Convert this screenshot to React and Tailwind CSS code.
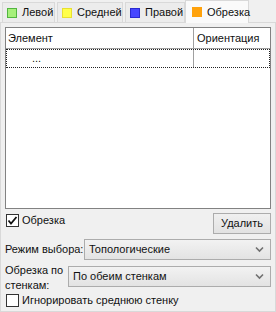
import React from 'react'

const tabs = [
  { label: 'Левой', w: 'w-[53px]', swatch: 'bg-[#a6f07a] border-[#52b540]' },
  { label: 'Средней', w: 'w-[66px]', swatch: 'bg-[#ffff4a] border-[#e8e030]' },
  { label: 'Правой', w: 'w-[60px]', swatch: 'bg-[#4646ff] border-[#2a2ad0]' },
]

function Chevron() {
  return (
    <svg width="9" height="7" viewBox="0 0 9 7" className="text-[#707070] shrink-0">
      <path d="M1 1.5 L4.5 5 L8 1.5" fill="none" stroke="currentColor" strokeWidth="1.6" />
    </svg>
  )
}

function Select({ value, className }) {
  return (
    <div className={`h-[21px] flex items-center justify-between border border-[#acacac] bg-gradient-to-b from-[#f2f2f2] to-[#e3e3e3] pl-[4px] pr-[6px] ${className}`}>
      <span className="whitespace-nowrap">{value}</span>
      <Chevron />
    </div>
  )
}

function Check({ checked }) {
  return (
    <div className="w-[13px] h-[13px] shrink-0 border border-[#333] bg-white flex items-center justify-center">
      {checked && (
        <svg width="11" height="11" viewBox="0 0 11 11">
          <path d="M1.5 5.5 L4 8.5 L9.5 2" fill="none" stroke="#111" strokeWidth="1.8" />
        </svg>
      )}
    </div>
  )
}

export default function App() {
  return (
    <div className="w-[276px] h-[312px] overflow-hidden bg-[#f0f0f0] text-[11px] text-[#111] font-['Liberation_Sans',Arial,sans-serif] leading-none">
      {/* Tabs */}
      <div className="flex items-end h-[22px] pl-[2px]">
        {tabs.map(t => (
          <div key={t.label} className={`${t.w} h-[20px] flex items-center gap-[5px] pl-[4px] mr-[2px] border border-b-0 border-[#d9d9d9] bg-[#ececec] whitespace-nowrap`}>
            <div className={`w-[10px] h-[10px] shrink-0 border ${t.swatch}`} />
            <span>{t.label}</span>
          </div>
        ))}
        <div className="w-[64px] -ml-[2px] h-[23px] -mb-px flex items-center gap-[5px] pl-[6px] border border-b-0 border-[#d9d9d9] bg-[#fafafa] relative z-10 whitespace-nowrap">
          <div className="w-[10px] h-[10px] shrink-0 bg-[#ffa20c]" />
          <span>Обрезка</span>
        </div>
      </div>

      {/* Panel */}
      <div className="h-[290px] border border-[#d9d9d9] bg-[#f0f0f0] px-[4px] pt-[4px] flex flex-col">
        {/* Table */}
        <div className="h-[182px] shrink-0 border border-[#828282] bg-white flex flex-col">
          <div className="flex h-[21px] border-b border-[#a0a0a0]">
            <div className="w-[188px] border-r border-[#a0a0a0] flex items-center pl-[2px]">Элемент</div>
            <div className="flex-1 flex items-center pl-[3px] whitespace-nowrap">Ориентация</div>
          </div>
          <div className="flex h-[19px] border border-dotted border-[#222]">
            <div className="w-[187px] border-r border-[#a0a0a0] flex items-center pl-[25px]">...</div>
            <div className="flex-1" />
          </div>
        </div>

        {/* Checkbox + delete */}
        <div className="flex items-start justify-between mt-[4px]">
          <label className="flex items-center gap-[3px] pl-[1px] mt-[1px]">
            <Check checked />
            <span>Обрезка</span>
          </label>
          <div className="w-[58px] h-[21px] border border-[#acacac] bg-gradient-to-b from-[#f0f0f0] to-[#e2e2e2] flex items-center justify-center">Удалить</div>
        </div>

        {/* Selection mode */}
        <div className="flex items-center mt-[5px]">
          <span className="w-[79px] shrink-0 whitespace-nowrap">Режим выбора:</span>
          <Select value="Топологические" className="flex-1" />
        </div>

        {/* Trim by walls */}
        <div className="flex items-start mt-[6px]">
          <span className="w-[63px] shrink-0 leading-[15px] -mt-[3px] whitespace-nowrap">Обрезка по<br />стенкам:</span>
          <Select value="По обеим стенкам" className="flex-1" />
        </div>

        {/* Ignore middle wall */}
        <label className="flex items-center gap-[3px] mt-[1px] pl-[1px]">
          <Check />
          <span className="whitespace-nowrap">Игнорировать среднюю стенку</span>
        </label>
      </div>
    </div>
  )
}
